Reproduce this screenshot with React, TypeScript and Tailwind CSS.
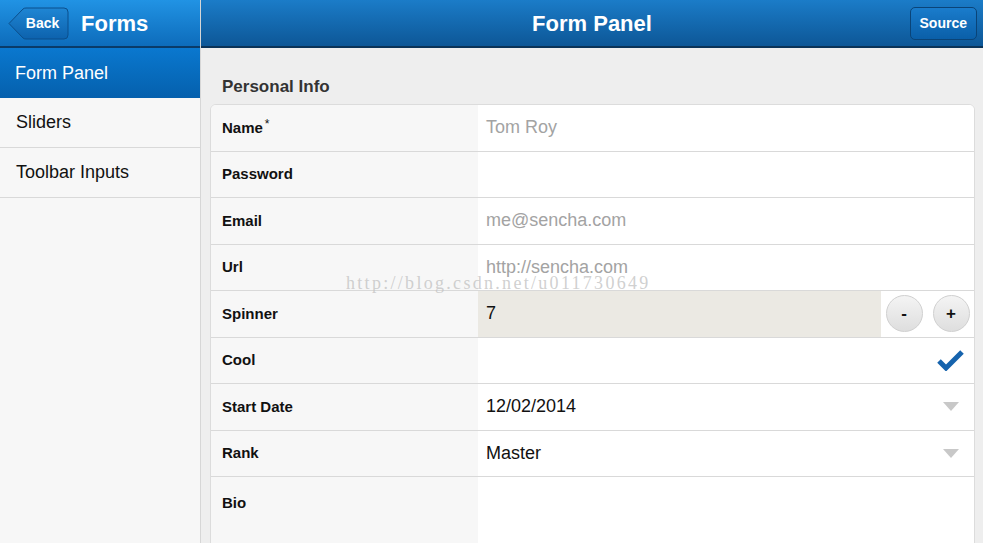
import React from 'react'

const font = { fontFamily: '"Liberation Sans", Arial, sans-serif' }

const rows = [
    { label: 'Name', required: true, value: 'Tom Roy', kind: 'placeholder' },
    { label: 'Password', value: '', kind: 'text' },
    { label: 'Email', value: 'me@sencha.com', kind: 'placeholder' },
    { label: 'Url', value: 'http://sencha.com', kind: 'placeholder' },
    { label: 'Spinner', value: '7', kind: 'spinner' },
    { label: 'Cool', value: '', kind: 'check' },
    { label: 'Start Date', value: '12/02/2014', kind: 'select' },
    { label: 'Rank', value: 'Master', kind: 'select' },
]

function BackButton() {
    return (
        <div className="relative w-[61px] h-[33px] flex items-center justify-center pl-[8px]">
            <svg className="absolute inset-0" width="61" height="33" viewBox="0 0 61 33">
                <defs>
                    <linearGradient id="bk" x1="0" y1="0" x2="0" y2="1">
                        <stop offset="0" stopColor="#1f86d4" />
                        <stop offset="1" stopColor="#0d62ad" />
                    </linearGradient>
                </defs>
                <path d="M1 16.5 L15 2 Q16 1 18 1 L56 1 Q60 1 60 5 L60 28 Q60 32 56 32 L18 32 Q16 32 15 31 Z" fill="url(#bk)" stroke="#0b4f8c" strokeWidth="1" />
            </svg>
            <span className="relative text-white text-[14px] font-bold">Back</span>
        </div>
    )
}

function Sidebar() {
    const items = ['Form Panel', 'Sliders', 'Toolbar Inputs']
    return (
        <div className="w-[201px] shrink-0 flex flex-col bg-[#f7f7f7] border-r border-[#d6d6d6]">
            <div className="h-[48px] flex items-center gap-[12px] px-[8px] pt-[1px] bg-gradient-to-b from-[#2193e4] to-[#0d6cbb] border-b-2 border-[#0a3b68]">
                <BackButton />
                <span className="text-white text-[22px] font-bold">Forms</span>
            </div>
            {items.map((item, i) => (
                <div
                    key={item}
                    className={
                        i === 0
                            ? 'h-[50px] flex items-center px-[15px] text-[18px] text-white bg-gradient-to-b from-[#0a78cf] to-[#0560ad]'
                            : 'h-[50px] flex items-center px-[16px] text-[18px] text-[#111] border-b border-[#d9d9d9]'
                    }
                >
                    {item}
                </div>
            ))}
        </div>
    )
}

function Circle({ sign }: { sign: string }) {
    return (
        <div className="w-[37px] h-[37px] rounded-full bg-gradient-to-b from-[#f4f4f4] to-[#dedede] border border-[#d0d0d0] flex items-center justify-center text-[17px] font-bold text-[#111]">
            {sign}
        </div>
    )
}

function Field({ value, kind }: { value: string; kind: string }) {
    if (kind === 'spinner') {
        return (
            <div className="flex-1 flex h-full">
                <div className="flex-1 bg-[#ebe9e3] flex items-center pl-[8px] text-[18px] text-[#111]">{value}</div>
                <div className="w-[93px] flex items-center justify-center gap-[10px] bg-white">
                    <Circle sign="-" />
                    <Circle sign="+" />
                </div>
            </div>
        )
    }
    return (
        <div className="flex-1 h-full bg-white flex items-center justify-between pl-[8px] pr-[14px]">
            <span className={kind === 'placeholder' ? 'text-[18px] text-[#a3a3a3]' : 'text-[18px] text-[#111]'}>{value}</span>
            {kind === 'check' && (
                <svg width="27" height="22" viewBox="0 0 27 22" className="mr-[-4px]">
                    <path d="M2 12 L9 19 L25 3" fill="none" stroke="#1663ad" strokeWidth="5" strokeLinejoin="miter" />
                </svg>
            )}
            {kind === 'select' && (
                <svg width="16" height="9" viewBox="0 0 16 9" className="mr-[1px]">
                    <path d="M0 0 L16 0 L8 9 Z" fill="#c8c8c8" />
                </svg>
            )}
        </div>
    )
}

export default function App() {
    return (
        <div className="w-[983px] h-[543px] flex overflow-hidden relative" style={font}>
            <Sidebar />
            <div className="flex-1 flex flex-col bg-[#eeeeee] min-w-0">
                <div className="h-[48px] shrink-0 flex items-center justify-between relative bg-gradient-to-b from-[#1b7cc8] to-[#0d5797] border-b-2 border-[#0a3358] pr-[6px] pt-[1px]">
                    <span className="absolute left-0 right-0 text-center text-white text-[22px] font-bold">Form Panel</span>
                    <span />
                    <div className="relative h-[33px] px-[9px] flex items-center rounded-[5px] bg-gradient-to-b from-[#1a7ccc] to-[#0a5fa8] border border-[#0a4478] text-white text-[14px] font-bold">
                        Source
                    </div>
                </div>
                <div className="flex-1 pl-[9px] pr-[8px] pt-[28px] min-h-0 overflow-hidden">
                    <div className="pl-[12px] h-[22px] leading-[22px] text-[17px] font-bold text-[#333] mb-[6px]">Personal Info</div>
                    <div className="rounded-t-[6px] border border-[#dcdcdc] overflow-hidden bg-white">
                        {rows.map((r) => (
                            <div key={r.label} className="h-[46.5px] flex border-b border-[#d9d9d9]">
                                <div className="w-[267px] shrink-0 bg-[#f7f7f7] flex items-center pl-[11px] text-[15px] font-bold text-[#111]">
                                    {r.label}
                                    {r.required && <span className="text-[12px] ml-[2px] -mt-[8px] font-normal">*</span>}
                                </div>
                                <Field value={r.value} kind={r.kind} />
                            </div>
                        ))}
                        <div className="h-[90px] flex">
                            <div className="w-[267px] shrink-0 bg-[#f7f7f7] pl-[11px] pt-[15px] text-[15px] font-bold text-[#111]">Bio</div>
                            <div className="flex-1 bg-white" />
                        </div>
                    </div>
                </div>
            </div>
            {/* csdn watermark lies over the form */}
            <div
                className="absolute left-[346px] top-[270px] text-[18px] text-[#c4c4c4]/80 pointer-events-none tracking-[2.3px]"
                style={{ fontFamily: '"Liberation Serif", "Times New Roman", serif' }}
            >
                http://blog.csdn.net/u011730649
            </div>
        </div>
    )
}
